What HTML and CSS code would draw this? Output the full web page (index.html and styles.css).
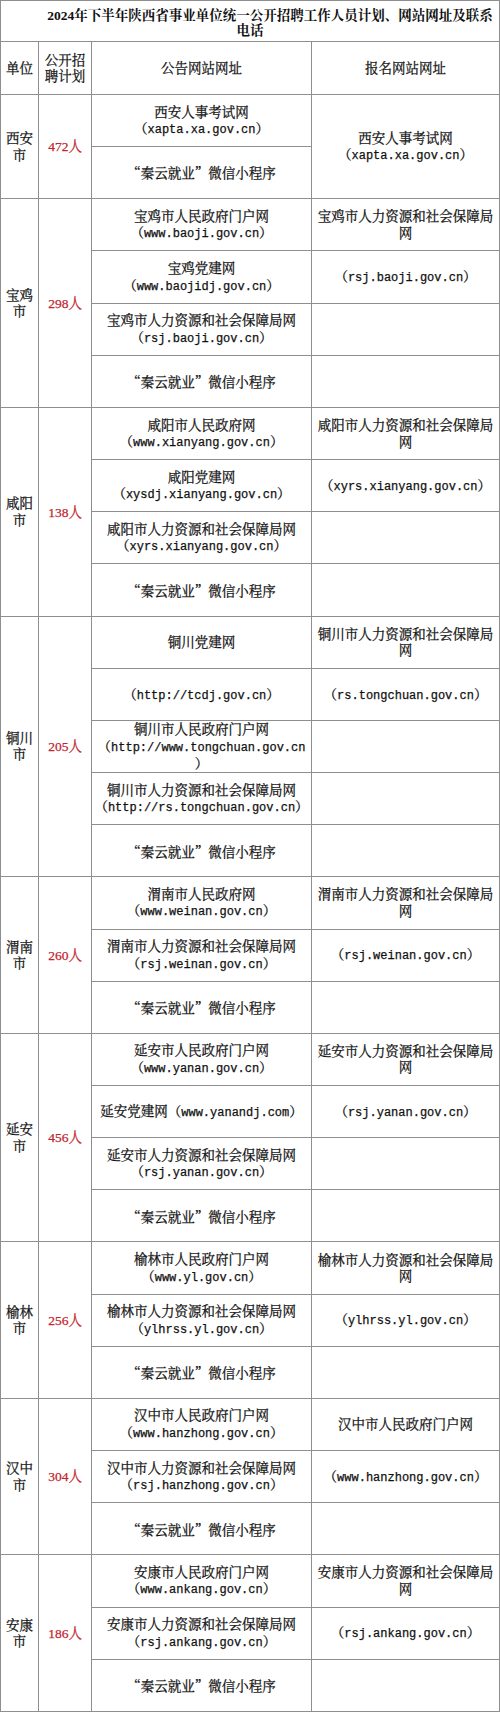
FILE: index.html
```html
<!DOCTYPE html>
<html lang="zh-CN">
<head>
<meta charset="utf-8">
<title>2024年下半年陕西省事业单位统一公开招聘</title>
<link rel="stylesheet" href="styles.css">
</head>
<body>
<div class="sheet">
  <div class="c title"><div class="t">2024年下半年陕西省事业单位统一公开招聘工作人员计划、网站网址及联系电话</div></div>

  <div class="c c1 head"><div class="t">单位</div></div>
  <div class="c c2 head"><div class="t">公开招聘计划</div></div>
  <div class="c c3 head"><div class="t">公告网站网址</div></div>
  <div class="c c4 head"><div class="t">报名网站网址</div></div>

  <!-- 西安 -->
  <div class="c c1 s2"><div class="t">西安市</div></div>
  <div class="c c2 s2"><div class="t num">472人</div></div>
  <div class="c c3"><div class="t">西安人事考试网<br>（<span class="u">xapta.xa.gov.cn</span>）</div></div>
  <div class="c c4 s2"><div class="t">西安人事考试网<br>（<span class="u">xapta.xa.gov.cn</span>）</div></div>
  <div class="c c3"><div class="t"><span class="q">“</span>秦云就业<span class="q">”</span>微信小程序</div></div>

  <!-- 宝鸡 -->
  <div class="c c1 s4"><div class="t">宝鸡市</div></div>
  <div class="c c2 s4"><div class="t num">298人</div></div>
  <div class="c c3"><div class="t">宝鸡市人民政府门户网<br>（<span class="u">www.baoji.gov.cn</span>）</div></div>
  <div class="c c4"><div class="t">宝鸡市人力资源和社会保障局网</div></div>
  <div class="c c3"><div class="t">宝鸡党建网<br>（<span class="u">www.baojidj.gov.cn</span>）</div></div>
  <div class="c c4"><div class="t">（<span class="u">rsj.baoji.gov.cn</span>）</div></div>
  <div class="c c3"><div class="t">宝鸡市人力资源和社会保障局网<br>（<span class="u">rsj.baoji.gov.cn</span>）</div></div>
  <div class="c c4"></div>
  <div class="c c3"><div class="t"><span class="q">“</span>秦云就业<span class="q">”</span>微信小程序</div></div>
  <div class="c c4"></div>

  <!-- 咸阳 -->
  <div class="c c1 s4"><div class="t">咸阳市</div></div>
  <div class="c c2 s4"><div class="t num">138人</div></div>
  <div class="c c3"><div class="t">咸阳市人民政府网<br>（<span class="u">www.xianyang.gov.cn</span>）</div></div>
  <div class="c c4"><div class="t">咸阳市人力资源和社会保障局网</div></div>
  <div class="c c3"><div class="t">咸阳党建网<br>（<span class="u">xysdj.xianyang.gov.cn</span>）</div></div>
  <div class="c c4"><div class="t">（<span class="u">xyrs.xianyang.gov.cn</span>）</div></div>
  <div class="c c3"><div class="t">咸阳市人力资源和社会保障局网<br>（<span class="u">xyrs.xianyang.gov.cn</span>）</div></div>
  <div class="c c4"></div>
  <div class="c c3"><div class="t"><span class="q">“</span>秦云就业<span class="q">”</span>微信小程序</div></div>
  <div class="c c4"></div>

  <!-- 铜川 -->
  <div class="c c1 s5"><div class="t">铜川市</div></div>
  <div class="c c2 s5"><div class="t num">205人</div></div>
  <div class="c c3"><div class="t">铜川党建网</div></div>
  <div class="c c4"><div class="t">铜川市人力资源和社会保障局网</div></div>
  <div class="c c3"><div class="t">（<span class="u">http://tcdj.gov.cn</span>）</div></div>
  <div class="c c4"><div class="t">（<span class="u">rs.tongchuan.gov.cn</span>）</div></div>
  <div class="c c3"><div class="t">铜川市人民政府门户网<br>（<span class="u">http://www.tongchuan.gov.cn</span><br>）</div></div>
  <div class="c c4"></div>
  <div class="c c3"><div class="t">铜川市人力资源和社会保障局网<br>（<span class="u">http://rs.tongchuan.gov.cn</span>）</div></div>
  <div class="c c4"></div>
  <div class="c c3"><div class="t"><span class="q">“</span>秦云就业<span class="q">”</span>微信小程序</div></div>
  <div class="c c4"></div>

  <!-- 渭南 -->
  <div class="c c1 s3"><div class="t">渭南市</div></div>
  <div class="c c2 s3"><div class="t num">260人</div></div>
  <div class="c c3"><div class="t">渭南市人民政府网<br>（<span class="u">www.weinan.gov.cn</span>）</div></div>
  <div class="c c4"><div class="t">渭南市人力资源和社会保障局网</div></div>
  <div class="c c3"><div class="t">渭南市人力资源和社会保障局网<br>（<span class="u">rsj.weinan.gov.cn</span>）</div></div>
  <div class="c c4"><div class="t">（<span class="u">rsj.weinan.gov.cn</span>）</div></div>
  <div class="c c3"><div class="t"><span class="q">“</span>秦云就业<span class="q">”</span>微信小程序</div></div>
  <div class="c c4"></div>

  <!-- 延安 -->
  <div class="c c1 s4"><div class="t">延安市</div></div>
  <div class="c c2 s4"><div class="t num">456人</div></div>
  <div class="c c3"><div class="t">延安市人民政府门户网<br>（<span class="u">www.yanan.gov.cn</span>）</div></div>
  <div class="c c4"><div class="t">延安市人力资源和社会保障局网</div></div>
  <div class="c c3"><div class="t">延安党建网（<span class="u">www.yanandj.com</span>）</div></div>
  <div class="c c4"><div class="t">（<span class="u">rsj.yanan.gov.cn</span>）</div></div>
  <div class="c c3"><div class="t">延安市人力资源和社会保障局网<br>（<span class="u">rsj.yanan.gov.cn</span>）</div></div>
  <div class="c c4"></div>
  <div class="c c3"><div class="t"><span class="q">“</span>秦云就业<span class="q">”</span>微信小程序</div></div>
  <div class="c c4"></div>

  <!-- 榆林 -->
  <div class="c c1 s3"><div class="t">榆林市</div></div>
  <div class="c c2 s3"><div class="t num">256人</div></div>
  <div class="c c3"><div class="t">榆林市人民政府门户网<br>（<span class="u">www.yl.gov.cn</span>）</div></div>
  <div class="c c4"><div class="t">榆林市人力资源和社会保障局网</div></div>
  <div class="c c3"><div class="t">榆林市人力资源和社会保障局网<br>（<span class="u">ylhrss.yl.gov.cn</span>）</div></div>
  <div class="c c4"><div class="t">（<span class="u">ylhrss.yl.gov.cn</span>）</div></div>
  <div class="c c3"><div class="t"><span class="q">“</span>秦云就业<span class="q">”</span>微信小程序</div></div>
  <div class="c c4"></div>

  <!-- 汉中 -->
  <div class="c c1 s3"><div class="t">汉中市</div></div>
  <div class="c c2 s3"><div class="t num">304人</div></div>
  <div class="c c3"><div class="t">汉中市人民政府门户网<br>（<span class="u">www.hanzhong.gov.cn</span>）</div></div>
  <div class="c c4"><div class="t">汉中市人民政府门户网</div></div>
  <div class="c c3"><div class="t">汉中市人力资源和社会保障局网<br>（<span class="u">rsj.hanzhong.gov.cn</span>）</div></div>
  <div class="c c4"><div class="t">（<span class="u">www.hanzhong.gov.cn</span>）</div></div>
  <div class="c c3"><div class="t"><span class="q">“</span>秦云就业<span class="q">”</span>微信小程序</div></div>
  <div class="c c4"></div>

  <!-- 安康 -->
  <div class="c c1 s3"><div class="t">安康市</div></div>
  <div class="c c2 s3"><div class="t num">186人</div></div>
  <div class="c c3"><div class="t">安康市人民政府门户网<br>（<span class="u">www.ankang.gov.cn</span>）</div></div>
  <div class="c c4"><div class="t">安康市人力资源和社会保障局网</div></div>
  <div class="c c3"><div class="t">安康市人力资源和社会保障局网<br>（<span class="u">rsj.ankang.gov.cn</span>）</div></div>
  <div class="c c4"><div class="t">（<span class="u">rsj.ankang.gov.cn</span>）</div></div>
  <div class="c c3"><div class="t"><span class="q">“</span>秦云就业<span class="q">”</span>微信小程序</div></div>
  <div class="c c4"></div>
</div>
</body>
</html>
```

FILE: styles.css
```css
html, body {
  margin: 0;
  padding: 0;
  background: #ffffff;
}

body {
  font-family: "Liberation Serif", "Noto Serif CJK SC", "Noto Sans CJK SC", serif;
  font-size: 13.5px;
  color: #111111;
}

.sheet {
  display: grid;
  grid-template-columns: 37px 52px 219px 187px;
  grid-template-rows: 40px 52px repeat(31, 51.16px);
  gap: 1px;
  width: 498px;
  background: #8e8e8e;
  border: 1px solid #8e8e8e;
}

.c {
  background: #ffffff;
  display: flex;
  align-items: center;
  justify-content: center;
  text-align: center;
  padding: 2px 2px 0;
  min-width: 0;
}

.t {
  line-height: 16.5px;
  -webkit-text-stroke-width: 0.25px;
}

.title {
  grid-column: 1 / 5;
  padding-top: 4px;
}

.title .t {
  font-weight: bold;
  line-height: 15.5px;
  text-indent: 40px;
  -webkit-text-stroke-width: 0;
}

.c1 { grid-column: 1; }
.c2 { grid-column: 2; }
.c3 { grid-column: 3; }
.c4 { grid-column: 4; }

.s2 { grid-row: span 2; }
.s3 { grid-row: span 3; }
.s4 { grid-row: span 4; }
.s5 { grid-row: span 5; }

.num {
  color: #c0262e;
}

.u {
  font-family: "Liberation Mono", monospace;
  font-size: 12px;
}

.q {
  font-family: "Noto Serif CJK SC", "Noto Sans CJK SC", sans-serif;
  font-feature-settings: "fwid" 1;
}
```
